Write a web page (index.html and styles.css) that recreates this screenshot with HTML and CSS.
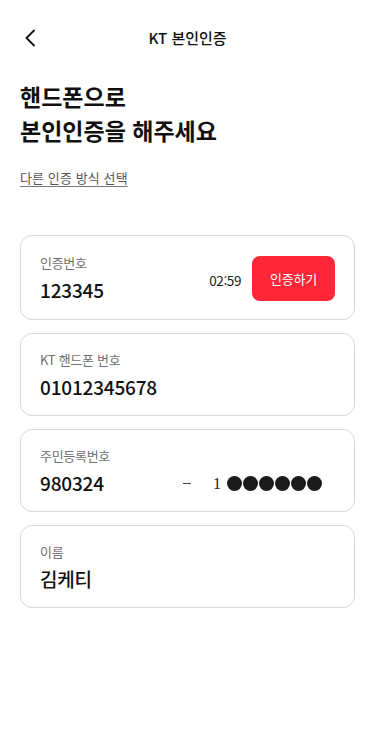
FILE: index.html
```html
<!DOCTYPE html>
<html lang="ko">
<head>
<meta charset="utf-8">
<meta name="viewport" content="width=device-width, initial-scale=1">
<title>KT 본인인증</title>
<link rel="stylesheet" href="styles.css">
</head>
<body>
<div class="page">
  <header class="topbar">
    <button class="back" aria-label="뒤로">
      <svg width="12" height="18" viewBox="0 0 12 18" fill="none"><path d="M10 1.5L2.5 9L10 16.5" stroke="#111" stroke-width="1.8" stroke-linecap="round" stroke-linejoin="round"/></svg>
    </button>
    <h1 class="title">KT 본인인증</h1>
  </header>

  <h2 class="heading">핸드폰으로<br>본인인증을 해주세요</h2>
  <a class="alt-link" href="#">다른 인증 방식 선택</a>

  <div class="fields">
    <div class="card card-code">
      <div class="field">
        <div class="label">인증번호</div>
        <div class="value">123345</div>
      </div>
      <span class="timer">02:59</span>
      <button class="verify">인증하기</button>
    </div>

    <div class="card">
      <div class="label">KT 핸드폰 번호</div>
      <div class="value">01012345678</div>
    </div>

    <div class="card">
      <div class="label">주민등록번호</div>
      <div class="rrn">
        <span class="value">980324</span>
        <span class="dash"></span>
        <span class="rrn-back"><span class="digit">1</span><span class="dots"><i></i><i></i><i></i><i></i><i></i><i></i></span></span>
      </div>
    </div>

    <div class="card">
      <div class="label">이름</div>
      <div class="value">김케티</div>
    </div>
  </div>
</div>
</body>
</html>
```
FILE: styles.css
```css
* { box-sizing: border-box; }
html, body { margin: 0; padding: 0; background: #fff; }
body {
  font-family: "Noto Sans CJK KR", "Noto Sans", sans-serif;
  color: #111;
}
.page { padding: 0 20px; }

.topbar {
  height: 74px;
  display: flex;
  align-items: center;
  justify-content: center;
  position: relative;
}
.back {
  position: absolute;
  left: 4px;
  top: 28px;
  width: 14px;
  height: 20px;
  padding: 0;
  border: 0;
  background: none;
  display: flex;
  align-items: center;
}
.title {
  margin: 0;
  font-size: 15px;
  font-weight: 500;
  letter-spacing: 0;
  color: #111;
}

.heading {
  margin: 5px 0 0;
  font-size: 23px;
  line-height: 34px;
  font-weight: 700;
  letter-spacing: 0;
  color: #111;
}
.alt-link {
  display: inline-block;
  margin-top: 21px;
  font-size: 13px;
  line-height: 20px;
  letter-spacing: 0.1px;
  color: #555;
  text-decoration: underline;
  text-underline-offset: 3px;
  text-decoration-color: #777;
}

.fields {
  margin-top: 47px;
  display: flex;
  flex-direction: column;
  gap: 13px;
}
.card {
  border: 1px solid #d9d9d9;
  border-radius: 12px;
  padding: 17px 19px 14px;
}
.card-code {
  display: flex;
  align-items: center;
  padding-top: 18px;
  padding-bottom: 15px;
}
.field { flex: 1; }
.label {
  font-size: 13px;
  line-height: 18px;
  color: #707070;
  letter-spacing: -0.3px;
}
.value {
  margin-top: 4px;
  font-size: 19px;
  line-height: 28px;
  color: #111;
  letter-spacing: -0.2px;
  font-weight: 500;
}
.timer {
  font-size: 13.5px;
  color: #222;
  letter-spacing: -0.4px;
  margin-right: 11px;
  margin-top: 2px;
}
.verify {
  width: 83px;
  height: 45px;
  border: 0;
  border-radius: 8px;
  background: #ff2637;
  color: #fff;
  font-family: inherit;
  font-size: 13px;
  letter-spacing: -0.2px;
  font-weight: 400;
  margin-top: -1px;
}

.rrn {
  display: grid;
  grid-template-columns: 1fr 7px 1fr;
  column-gap: 22px;
  align-items: center;
  margin-top: 4px;
}
.rrn .value { margin-top: 0; }
.dash {
  height: 1px;
  background: #444;
  margin-left: -1px;
}
.rrn-back {
  display: flex;
  align-items: center;
}
.digit {
  font-family: "Liberation Serif", serif;
  font-size: 16px;
  color: #222;
  margin-right: 6px;
  margin-top: 2px;
}
.dots { display: flex; gap: 1px; }
.dots i {
  width: 15px;
  height: 15px;
  border-radius: 50%;
  background: #1a1a1a;
}
```
